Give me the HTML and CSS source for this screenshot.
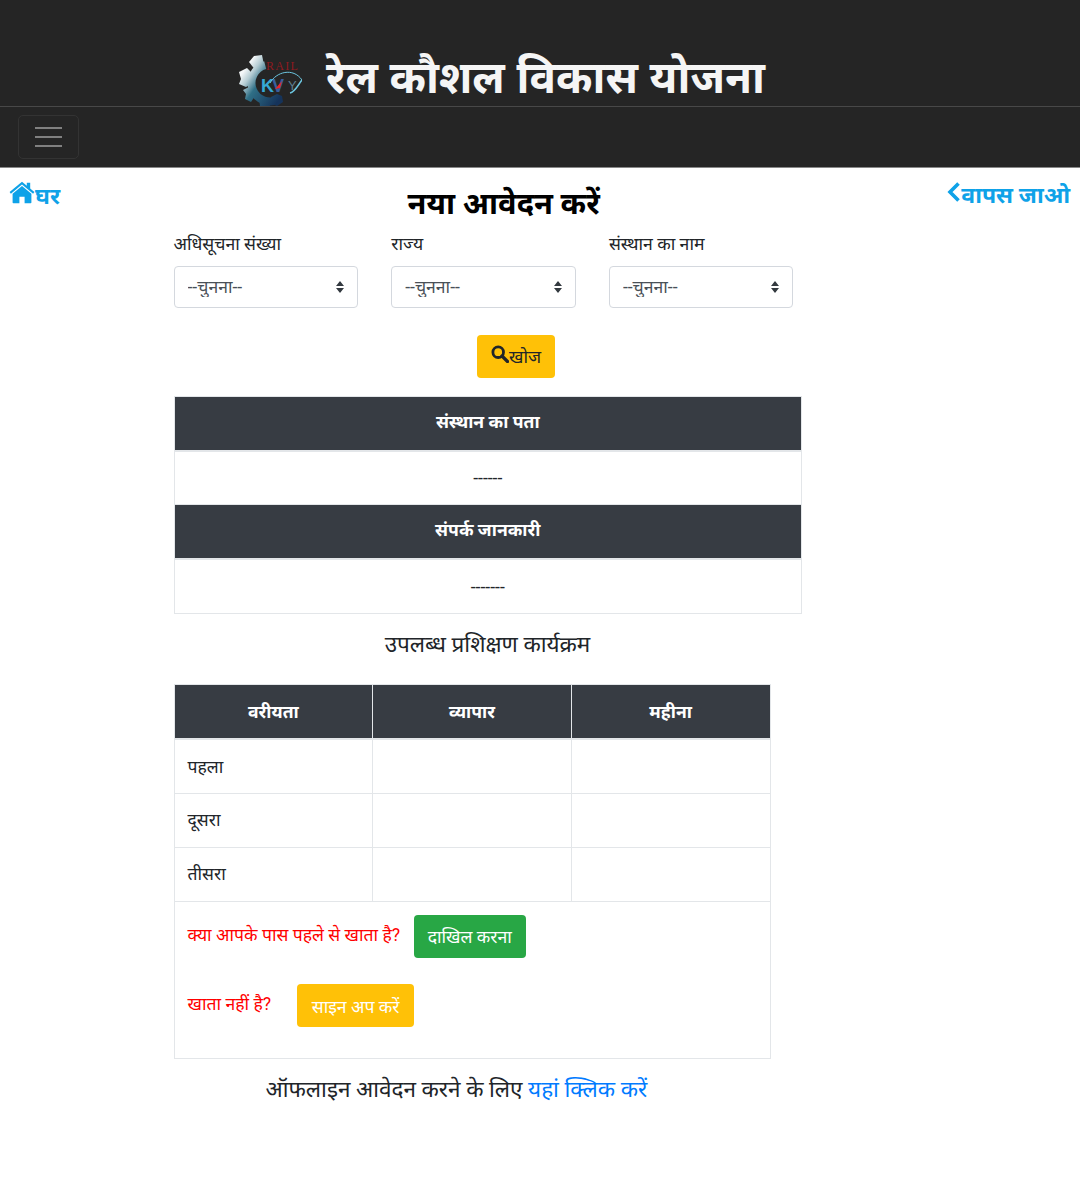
FILE: index.html
```html
<!DOCTYPE html>
<html lang="hi">
<head>
    <meta charset="UTF-8">
    <meta name="viewport" content="width=device-width, initial-scale=1.0">
    <title>रेल कौशल विकास योजना</title>
    <link rel="stylesheet" href="styles.css">
</head>
<body>
    <header class="site-header">
        <div class="brand">
            <svg class="logo" viewBox="0 0 64 51" width="64" height="51">
                <defs>
                    <linearGradient id="gear" gradientUnits="userSpaceOnUse" x1="3" y1="20" x2="40" y2="46">
                        <stop offset="0" stop-color="#f4f7f8"/>
                        <stop offset="0.18" stop-color="#b5ccd3"/>
                        <stop offset="0.42" stop-color="#2f6f86"/>
                        <stop offset="1" stop-color="#15335a"/>
                    </linearGradient>
                </defs>
                <g fill="url(#gear)">
                    <path d="M27.200 10.100A18.500 18.500 0 1 0 41.250 44" fill="none" stroke="url(#gear)" stroke-width="8"/>
                    <path d="M11 7l5-6 8-1 2 10-8 6z"/>
                    <path d="M1 17l8-4 4 4v12l-5 3-7-3 2-5z"/>
                    <path d="M5 35l6-3 6 9-4 6-6-3 1-5z"/>
                    <path d="M21 43l9 3 2 5H22z"/>
                    <path d="M33 42l6-3 5 2 1 6-6 4-5-2z"/>
                </g>
                <text x="28" y="15" class="logo-rail">RAIL</text>
                <text x="23" y="37" class="logo-k">K</text>
                <text x="34" y="37" class="logo-v">V</text>
                <text x="50" y="35" class="logo-y">Y</text>
                <path d="M32 28C38 17 55 12 64 25" fill="none" stroke="#6cc5df" stroke-width="1"/>
                <path d="M52 38C57 37 60 30 64 25" fill="none" stroke="#6cc5df" stroke-width="1.500"/>
                <path d="M37 34l7-8-2 7z" fill="#e8262d"/>
            </svg>
            <h1 class="site-title">रेल कौशल विकास योजना</h1>
        </div>
    </header>
    <nav class="navbar">
        <button class="toggler" aria-label="menu">
            <span></span><span></span><span></span>
        </button>
    </nav>

    <main>
        <div class="top-row">
            <a class="top-link" href="#">
                <svg viewBox="0 0 26 22" width="26" height="23"><path fill="currentColor" d="M13 4.500L3.600 12.300V21a.8.800 0 0 0 .8.800h6v-6.500h5.200v6.500h6a.8.800 0 0 0 .8-.8v-8.700zM25.400 10.600L21.200 7.100V1.200h-3.400v3L13 .3.600 10.600l1.300 1.600L13 3l11.100 9.200z"/></svg>घर
            </a>
            <h3 class="page-title">नया आवेदन करें</h3>
            <a class="top-link" href="#">
                <svg viewBox="0 0 14 22" width="14" height="22"><path fill="none" stroke="currentColor" stroke-width="3.600" d="M11.500 2.500L3 11l8.500 8.500"/></svg>वापस जाओ
            </a>
        </div>

        <div class="content">
            <form class="filters">
                <label class="field">
                    <span>अधिसूचना संख्या</span>
                    <select><option>--चुनना--</option></select>
                </label>
                <label class="field">
                    <span>राज्य</span>
                    <select><option>--चुनना--</option></select>
                </label>
                <label class="field">
                    <span>संस्थान का नाम</span>
                    <select><option>--चुनना--</option></select>
                </label>
            </form>

            <button class="btn btn-search">
                <svg viewBox="0 0 18 18" width="18" height="18"><circle cx="7.200" cy="7.200" r="5.300" fill="none" stroke="currentColor" stroke-width="2.800"/><path d="M11 11l5.500 5.500" stroke="currentColor" stroke-width="3.200" stroke-linecap="round"/></svg>खोज
            </button>

            <table class="tbl tbl-info">
                <tr><th>संस्थान का पता</th></tr>
                <tr><td class="short-cell">------</td></tr>
                <tr><th>संपर्क जानकारी</th></tr>
                <tr><td>-------</td></tr>
            </table>

            <h4 class="section-title">उपलब्ध प्रशिक्षण कार्यक्रम</h4>

            <table class="tbl tbl-choice">
                <tr><th>वरीयता</th><th>व्यापार</th><th>महीना</th></tr>
                <tr class="first-row"><td>पहला</td><td></td><td></td></tr>
                <tr><td>दूसरा</td><td></td><td></td></tr>
                <tr><td>तीसरा</td><td></td><td></td></tr>
                <tr>
                    <td colspan="3" class="account-cell">
                        <div class="account-row">
                            <span class="account-text">क्या आपके पास पहले से खाता है?</span>
                            <button class="btn btn-green">दाखिल करना</button>
                        </div>
                        <div class="account-row account-row-second">
                            <span class="account-text">खाता नहीं है?</span>
                            <button class="btn btn-yellow">साइन अप करें</button>
                        </div>
                    </td>
                </tr>
            </table>

            <p class="offline">ऑफलाइन आवेदन करने के लिए <a href="#">यहां क्लिक करें</a></p>
        </div>
    </main>
</body>
</html>
```

FILE: styles.css
```css
* {
    box-sizing: border-box;
}

html, body {
    margin: 0;
    padding: 0;
}

body {
    min-height: 1183px;
    background: #fff;
    color: #212529;
    font-family: Roboto, "Noto Sans", "Liberation Sans", sans-serif;
    font-size: 17.6px;
    line-height: 24px;
}

.site-header {
    height: 107px;
    background: #252525;
    border-bottom: 1px solid #484848;
    overflow: hidden;
}

.brand {
    display: flex;
    align-items: flex-start;
    padding: 48px 0 0 238px;
}

.logo {
    flex: none;
    margin-top: 7px;
}

.logo-rail {
    fill: #8e1a20;
    font-family: "Liberation Serif", serif;
    font-size: 12px;
    letter-spacing: 1.3px;
}

.logo-k {
    fill: #36a9d6;
    font-family: "Liberation Sans", sans-serif;
    font-size: 18px;
    font-weight: bold;
}

.logo-v {
    fill: #3a5f9e;
    font-family: "Liberation Sans", sans-serif;
    font-size: 18px;
    font-weight: bold;
}

.logo-y {
    fill: #5f7f8f;
    font-family: "Liberation Sans", sans-serif;
    font-size: 13px;
}

.site-title {
    margin: 0 0 0 24px;
    color: #f5f5f5;
    font-size: 44px;
    font-weight: 700;
    line-height: 60px;
    word-spacing: 0.7px;
    white-space: nowrap;
}

.navbar {
    height: 61px;
    padding: 8px 18px;
    background: #252525;
    border-bottom: 1px solid #888;
}

.toggler {
    display: flex;
    flex-direction: column;
    justify-content: center;
    gap: 7px;
    width: 61px;
    height: 44px;
    padding: 0 16px;
    background: transparent;
    border: 1px solid #333;
    border-radius: 5px;
}

.toggler span {
    display: block;
    height: 2px;
    background: #808080;
}

.top-row {
    display: flex;
    justify-content: space-between;
    align-items: flex-start;
    padding: 12px 10px 0 9px;
}

.top-link {
    display: flex;
    align-items: center;
    padding-top: 1px;
    color: #0ea2e8;
    font-size: 23px;
    font-weight: 700;
    line-height: 30px;
    text-decoration: none;
}

.top-link svg {
    margin-bottom: 8px;
}

.page-title {
    margin: 1px 0 0;
    color: #000;
    font-size: 30.8px;
    font-weight: 700;
    line-height: 46px;
}

.content {
    margin-top: 5px;
    padding-left: 173.500px;
}

.filters {
    display: grid;
    grid-template-columns: repeat(3, 184.5px);
    column-gap: 33.200px;
}

.field {
    display: block;
}

.field span {
    display: block;
    margin-bottom: 10px;
}

.field select {
    display: block;
    width: 100%;
    height: 42px;
    padding: 0 28px 0 13px;
    border: 1px solid #d4d8de;
    border-radius: 4px;
    color: #495057;
    font-family: inherit;
    font-size: 17.6px;
    appearance: none;
    background: #fff url("data:image/svg+xml,%3csvg xmlns='http://www.w3.org/2000/svg' width='10' height='12'%3e%3cpath fill='%23343a40' d='M5 0l4 5H1zM5 12L1 7h8z'/%3e%3c/svg%3e") no-repeat right 12px center;
}

.btn {
    display: inline-flex;
    align-items: center;
    height: 43px;
    padding: 0 13px 2px;
    border: 1px solid transparent;
    border-radius: 4px;
    font-family: inherit;
    font-size: 17.6px;
    white-space: nowrap;
}

.btn-search {
    margin: 27px 0 18px 303.500px;
    background: #ffc107;
    color: #212529;
}

.btn-search svg {
    margin-bottom: 3px;
}

.btn-green {
    background: #28a745;
    color: #fff;
}

.btn-yellow {
    padding: 0 13.700px;
    background: #ffc107;
    color: #fff;
}

.tbl {
    border-collapse: collapse;
    table-layout: fixed;
}

.tbl th, .tbl td {
    height: 54px;
    padding: 11px 13px 14px;
    border: 1px solid #e3e6e9;
    vertical-align: middle;
}

.tbl th {
    background: #373c43;
    color: #fff;
    text-align: center;
    font-weight: 700;
    border-bottom-width: 2px;
}

.tbl-info {
    width: 628.500px;
}

.tbl-info td {
    height: 55px;
    padding: 12px 13px 11px;
    text-align: center;
}

.tbl-info .short-cell {
    height: 54px;
}

.section-title {
    width: 628px;
    margin: 15px 0 25px;
    font-size: 22.5px;
    font-weight: 400;
    line-height: 30px;
    text-align: center;
}

.tbl-choice {
    width: 597px;
}

.tbl-choice th {
    padding: 13px 13px 12px;
}

.tbl-choice td {
    padding: 12px 13px 13px;
}

.tbl .first-row td {
    height: 55px;
    padding: 13px 13px 11px;
}

.tbl .account-cell {
    height: 157px;
    padding: 13px 13px 31px;
    vertical-align: top;
}

.account-row {
    display: flex;
    align-items: flex-start;
}

.account-row-second {
    margin-top: 26px;
}

.account-text {
    color: #f00;
    margin-right: 13.500px;
    line-height: 40px;
}

.account-row-second .account-text {
    margin-right: 26px;
}

.offline {
    margin: 15px 0 0 92px;
    font-size: 22.5px;
    line-height: 30px;
}

.offline a {
    color: #007bff;
    text-decoration: none;
}
```
